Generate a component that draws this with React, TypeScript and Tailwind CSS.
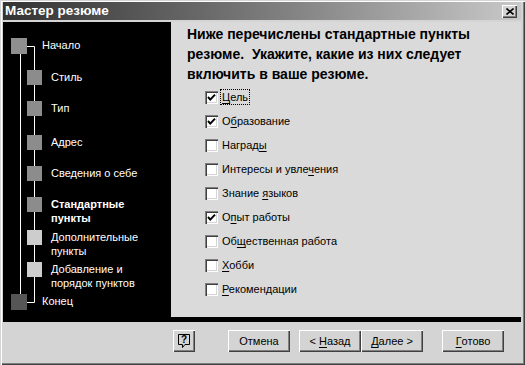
import type { ReactNode } from "react";

const UI_FONT = "font-['Liberation_Sans',Arial,sans-serif]";

interface Step {
  label: ReactNode;
  sub: boolean;
  row: string; // row height class
  square: string; // square colour class
  bold?: boolean;
}

const STEPS: Step[] = [
  { label: "Начало", sub: false, row: "h-[32px]", square: "bg-[#8f8f8f]" },
  { label: "Стиль", sub: true, row: "h-[31px]", square: "bg-[#8c8c8c]" },
  { label: "Тип", sub: true, row: "h-[34px]", square: "bg-[#8c8c8c]" },
  { label: "Адрес", sub: true, row: "h-[31px]", square: "bg-[#8c8c8c]" },
  { label: "Сведения о себе", sub: true, row: "h-[31px]", square: "bg-[#8c8c8c]" },
  {
    label: (
      <>
        Стандартные
        <br />
        пункты
      </>
    ),
    sub: true,
    row: "h-[33px]",
    square: "bg-[#8c8c8c]",
    bold: true,
  },
  {
    label: (
      <>
        Дополнительные
        <br />
        пункты
      </>
    ),
    sub: true,
    row: "h-[32px]",
    square: "bg-[#cdcdcd]",
  },
  {
    label: (
      <>
        Добавление и
        <br />
        порядок пунктов
      </>
    ),
    sub: true,
    row: "h-[32px]",
    square: "bg-[#cdcdcd]",
  },
  { label: "Конец", sub: false, row: "h-[30px]", square: "bg-[#565656]" },
];

const ITEMS: { text: string; u: number; checked: boolean }[] = [
  { text: "Цель", u: 0, checked: true },
  { text: "Образование", u: 1, checked: true },
  { text: "Награды", u: 6, checked: false },
  { text: "Интересы и увлечения", u: 15, checked: false },
  { text: "Знание языков", u: 7, checked: false },
  { text: "Опыт работы", u: 1, checked: true },
  { text: "Общественная работа", u: 2, checked: false },
  { text: "Хобби", u: 0, checked: false },
  { text: "Рекомендации", u: 0, checked: false },
];

function Mnemonic({ text, u }: { text: string; u: number }) {
  return (
    <>
      {text.slice(0, u)}
      <span className="underline underline-offset-[2px]">{text[u]}</span>
      {text.slice(u + 1)}
    </>
  );
}

const RAISED =
  "bg-[#d4d4d4] shadow-[inset_1px_1px_0_#ffffff,inset_-1px_-1px_0_#404040,inset_-2px_-2px_0_#808080]";

function Checkbox({ checked }: { checked: boolean }) {
  return (
    <span className="flex h-[13px] w-[13px] shrink-0 items-center justify-center bg-white shadow-[inset_1px_1px_0_#808080,inset_2px_2px_0_#404040,inset_-1px_-1px_0_#ffffff,inset_-2px_-2px_0_#d4d4d4]">
      {checked && (
        <svg width="9" height="9" viewBox="0 0 9 9">
          <path d="M1 4 L3.3 6.6 L8 1.6" fill="none" stroke="#000" strokeWidth="2" />
        </svg>
      )}
    </span>
  );
}

function Button({ children, className = "" }: { children: ReactNode; className?: string }) {
  return (
    <div
      className={`flex h-[22px] w-[62px] items-center justify-center text-[11px] text-black ${RAISED} ${className}`}
    >
      {children}
    </div>
  );
}

export default function App() {
  return (
    <div
      className={`flex h-[365px] w-[525px] flex-col bg-[#d4d4d4] ${UI_FONT} shadow-[inset_1px_1px_0_#d4d4d4,inset_2px_2px_0_#ffffff,inset_-1px_-1px_0_#404040,inset_-2px_-2px_0_#808080]`}
    >
      {/* Title bar */}
      <div className="ml-[3px] mr-[4px] mt-[2px] flex h-[18px] items-center justify-between bg-gradient-to-r from-[#333333] via-[#7a7a7a] to-[#c9c9c9] pl-[2px] pr-[4px]">
        <span className="text-[13.5px] font-bold leading-none text-white">Мастер резюме</span>
        <div className={`flex h-[13px] w-[15px] items-center justify-center ${RAISED}`}>
          <svg width="8" height="7" viewBox="0 0 8 7">
            <path d="M0.5 0.5 L7.5 6.5 M7.5 0.5 L0.5 6.5" stroke="#000" strokeWidth="1.6" />
          </svg>
        </div>
      </div>

      {/* Body */}
      <div className="ml-[3px] mr-[4px] mt-[2px] flex h-[300px] bg-black">
        {/* Steps panel */}
        <div className="relative w-[168px] pt-[16px]">
          <svg className="pointer-events-none absolute inset-0" width="168" height="300">
            <path
              d="M17.5 32 V272 M24 24.5 H31.5 V280.5 H24"
              fill="none"
              stroke="#ffffff"
              strokeWidth="1"
            />
          </svg>
          {STEPS.map((s, i) => (
            <div
              key={i}
              className={`relative flex items-start ${s.row} ${s.sub ? "pl-[24px]" : "pl-[8px]"}`}
            >
              <div
                className={`${s.square} shrink-0 ${s.sub ? "h-[15px] w-[15px]" : "h-[16px] w-[16px]"}`}
              />
              <div
                className={`text-[11px] leading-[14px] text-white ${s.sub ? "ml-[9px]" : "ml-[15px]"} ${s.bold ? "font-bold" : ""}`}
              >
                {s.label}
              </div>
            </div>
          ))}
        </div>

        {/* Content panel */}
        <div className="mb-[5px] flex-1 bg-[#dadada] pl-[16px] pt-[2px]">
          <p className="text-[14px] font-bold leading-[20px] text-black">
            Ниже перечислены стандартные пункты
            <br />
            резюме.&nbsp; Укажите, какие из них следует
            <br />
            включить в ваше резюме.
          </p>
          <ul className="ml-[18px] mt-[1px]">
            {ITEMS.map((it, i) => (
              <li key={i} className="flex h-[24px] items-center text-[11px] text-black">
                <Checkbox checked={it.checked} />
                <span
                  className={`ml-[2px] px-[1px] leading-[14px] ${
                    i === 0 ? "border border-dotted border-black" : "border border-transparent"
                  }`}
                >
                  <Mnemonic text={it.text} u={it.u} />
                </span>
              </li>
            ))}
          </ul>
        </div>
      </div>

      {/* Footer buttons */}
      <div className="ml-[173px] mt-[8px] flex items-start">
        <div className={`flex h-[22px] w-[22px] items-center justify-center ${RAISED}`}>
          <svg width="14" height="16" viewBox="0 0 14 16">
            <path
              d="M1.5 1.5 H12.5 V11.5 H8 L5.5 14.5 V11.5 H1.5 Z"
              fill="none"
              stroke="#000"
              strokeWidth="1"
            />
            <text
              x="7"
              y="10"
              textAnchor="middle"
              fontSize="10"
              fontWeight="bold"
              fontFamily="Liberation Sans, Arial, sans-serif"
            >
              ?
            </text>
          </svg>
        </div>
        <Button className="ml-[33px]">Отмена</Button>
        <Button className="ml-[9px]">
          &lt;&nbsp;<Mnemonic text="Назад" u={0} />
        </Button>
        <Button>
          <Mnemonic text="Далее" u={0} />
          &nbsp;&gt;
        </Button>
        <Button className="ml-[19px]">
          <Mnemonic text="Готово" u={0} />
        </Button>
      </div>
    </div>
  );
}
